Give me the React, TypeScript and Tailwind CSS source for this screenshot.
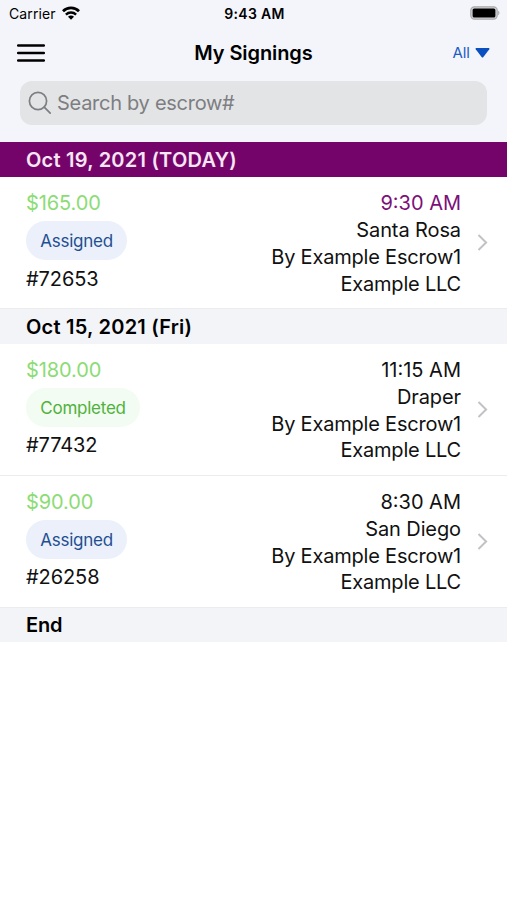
type SigningStatus = 'Assigned' | 'Completed'

type Signing = {
  id: string
  fee: string
  status: SigningStatus
  time: string
  city: string
  company: string
}

type SigningGroup = {
  label: string
  isToday: boolean
  signings: Signing[]
}

const GROUPS: SigningGroup[] = [
  {
    label: 'Oct 19, 2021 (TODAY)',
    isToday: true,
    signings: [
      { id: '72653', fee: '$165.00', status: 'Assigned', time: '9:30 AM', city: 'Santa Rosa', company: 'Example LLC' },
    ],
  },
  {
    label: 'Oct 15, 2021 (Fri)',
    isToday: false,
    signings: [
      { id: '77432', fee: '$180.00', status: 'Completed', time: '11:15 AM', city: 'Draper', company: 'Example LLC' },
      { id: '26258', fee: '$90.00', status: 'Assigned', time: '8:30 AM', city: 'San Diego', company: 'Example LLC' },
    ],
  },
]

const STATUS_STYLES: Record<SigningStatus, string> = {
  Assigned: 'w-[101px] bg-[#ebf0fb] text-[#1f4f91]',
  Completed: 'w-[114px] bg-[#f2fcf2] text-[#4fb23c]',
}

function StatusBar() {
  return (
    <div className="mb-[2px] grid h-6 grid-cols-3 items-center pr-[7px] pl-[9px] text-[14px]">
      <div className="flex items-center gap-[6px]">
        <span className="tracking-[0.1px]">Carrier</span>
        <svg width="18" height="14" viewBox="0 0 18 14" fill="none" stroke="#000" strokeWidth="2.7" className="-mt-[1px]">
          <path d="M1 5.2a11.3 11.3 0 0 1 16 0" />
          <path d="M3.9 8.6a7.2 7.2 0 0 1 10.2 0" strokeWidth="2.4" />
          <path d="M9 13.8 6 10.8a4.2 4.2 0 0 1 6 0z" fill="#000" stroke="none" />
        </svg>
      </div>
      <span className="text-center font-semibold tracking-[0.3px] whitespace-nowrap">9:43 AM</span>
      <svg width="30" height="14" viewBox="0 0 30 14" className="justify-self-end">
        <rect x="0.8" y="0.8" width="26.4" height="12.4" rx="3.6" fill="#d5d5d7" stroke="#a9a9ac" strokeWidth="1.2" />
        <rect x="2.6" y="2.5" width="22.8" height="9" rx="1.6" fill="#000" />
        <path d="M28.2 4.8c1.6.6 1.6 3.8 0 4.4z" fill="#a9a9ac" />
      </svg>
    </div>
  )
}

function NavBar() {
  return (
    <div className="grid h-[51px] grid-cols-3 items-center pr-[17px] pl-[17px]">
      <button aria-label="Menu" className="w-7">
        <svg width="28" height="18" viewBox="0 0 28 18" stroke="#000" strokeWidth="2.3" strokeLinecap="round">
          <path d="M1.1 1.5h25.8M1.1 9h25.8M1.1 16.5h25.8" />
        </svg>
      </button>
      <h1 className="text-center text-[20px] font-semibold tracking-[-0.1px] whitespace-nowrap">My Signings</h1>
      <button className="flex items-center gap-[5px] justify-self-end pt-px text-[15px] text-[#1c5cc4]">
        All
        <svg width="15" height="10" viewBox="0 0 15 10" fill="#0a4fc0" className="-mt-px">
          <path d="M1.2 0h12.6q1.2.2.5 1.2L8.4 9q-.9 1-1.8 0L.7 1.2Q0 .2 1.2 0z" />
        </svg>
      </button>
    </div>
  )
}

function SearchField() {
  return (
    <label className="mx-5 mt-[3px] flex h-11 items-center gap-[5px] rounded-xl bg-[#e3e4e6] pl-2 text-[20px] text-[#7d7e81]">
      <svg width="24" height="24" viewBox="0 0 24 24" fill="none" stroke="currentColor" strokeWidth="1.7" strokeLinecap="round">
        <circle cx="10" cy="10" r="8.6" />
        <path d="m16.2 16.2 6 6" />
      </svg>
      <span className="tracking-[-0.28px] whitespace-nowrap">Search by escrow#</span>
    </label>
  )
}

function SectionHeader({ label, isToday = false }: { label: string; isToday?: boolean }) {
  return (
    <h2
      className={`flex h-[34.7px] items-center pt-px pl-[26px] text-[20px] font-semibold ${
        isToday ? 'bg-[#75046a] text-[#f6e6f4]' : 'bg-[#f3f4f8] text-black'
      } ${label === 'End' ? 'tracking-[-0.2px]' : 'tracking-[0.23px]'}`}
    >
      {label}
    </h2>
  )
}

function SigningRow({ signing, isToday }: { signing: Signing; isToday: boolean }) {
  return (
    <li className="flex h-[132px] border-b border-[#ececee] pt-[13.4px] pr-[19px] pl-[26px] text-[20px] leading-[26.8px]">
      <div className="flex flex-col items-start">
        <span className="tracking-[-0.1px] text-[#8bdc74]">{signing.fee}</span>
        <span
          className={`mt-1 mb-[5.6px] flex h-[39px] items-center justify-center rounded-full pt-[1.6px] text-[17px] tracking-[-0.25px] ${STATUS_STYLES[signing.status]}`}
        >
          {signing.status}
        </span>
        <span className="tracking-[-0.1px]">#{signing.id}</span>
      </div>
      <div className="ml-auto text-right">
        <p className={isToday ? 'text-[#7d0f79]' : ''}>{signing.time}</p>
        <p className="tracking-[-0.1px]">{signing.city}</p>
        <p className="tracking-[-0.2px]">By Example Escrow1</p>
        <p className="tracking-[-0.2px]">{signing.company}</p>
      </div>
      <svg width="11" height="17" viewBox="0 0 11 17" fill="none" stroke="#c2c2c5" strokeWidth="2" className="mt-11 ml-4">
        <path d="m1.5 1 7.6 7.5L1.5 16" />
      </svg>
    </li>
  )
}

export default function App() {
  return (
    <main className="min-h-screen w-full bg-white font-[Inter,sans-serif] text-[#111]">
      <header className="h-[142.2px] bg-[#f4f5fa] pt-px text-black">
        <StatusBar />
        <NavBar />
        <SearchField />
      </header>
      {GROUPS.map((group) => (
        <section key={group.label}>
          <SectionHeader label={group.label} isToday={group.isToday} />
          <ul>
            {group.signings.map((signing) => (
              <SigningRow key={signing.id} signing={signing} isToday={group.isToday} />
            ))}
          </ul>
        </section>
      ))}
      <SectionHeader label="End" />
    </main>
  )
}
